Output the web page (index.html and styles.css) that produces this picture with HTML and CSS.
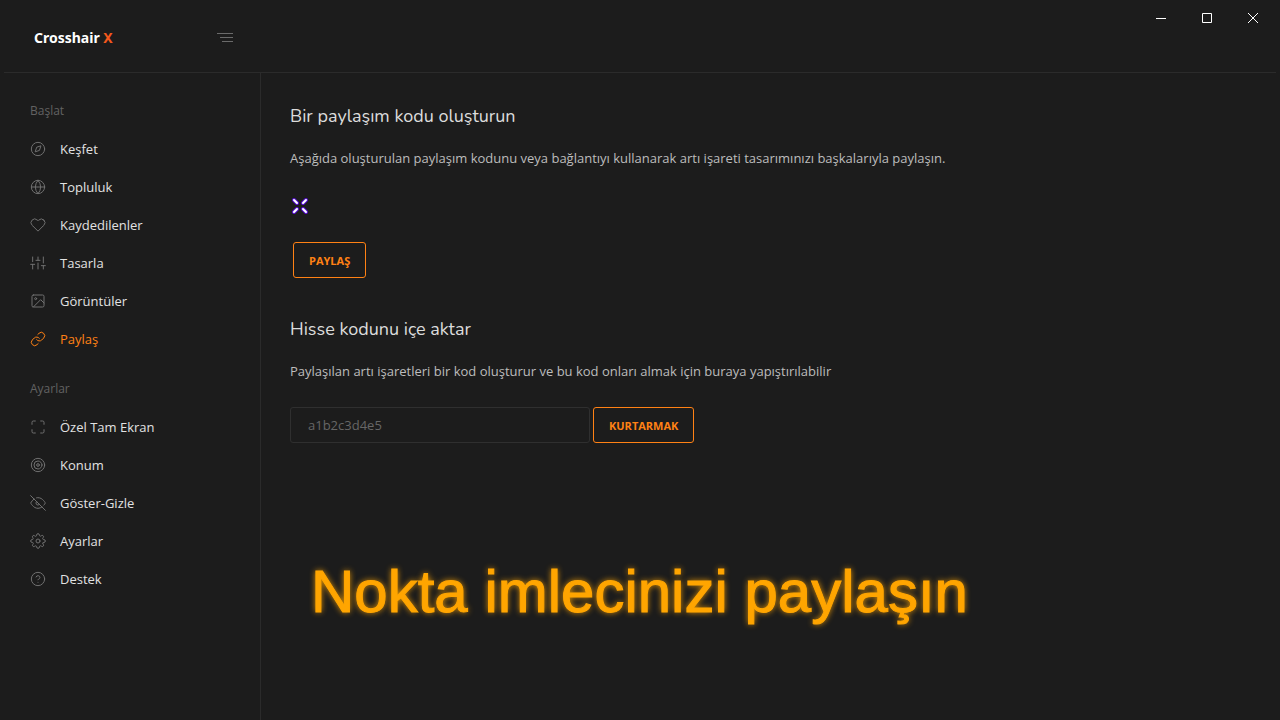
FILE: index.html
```html
<!DOCTYPE html>
<html lang="tr">
<head>
  <meta charset="UTF-8" />
  <meta name="viewport" content="width=device-width, initial-scale=1.0" />
  <title>Crosshair X</title>
  <link rel="stylesheet" href="styles.css">
</head>
<body>
  <header class="topbar">
    <div class="brand">
      <a href="#" class="logo">Crosshair <span>X</span></a>
      <button type="button" class="menu-toggle" aria-label="Menü">
        <svg width="16" height="10" viewBox="0 0 16 10"><path d="M0 .5h16M3 4.5h13M5 8.5h11"/></svg>
      </button>
    </div>
    <div class="window-controls">
      <button type="button" aria-label="Simge durumuna küçült"><svg viewBox="0 0 10 10"><path d="M0 5.5h10"/></svg></button>
      <button type="button" aria-label="Ekranı kapla"><svg viewBox="0 0 10 10"><path d="M.5.5h9v9h-9z"/></svg></button>
      <button type="button" aria-label="Kapat"><svg viewBox="0 0 10 10"><path d="M0 0l10 10M10 0L0 10"/></svg></button>
    </div>
  </header>

  <div class="layout">
    <nav class="sidebar">
      <h3>Başlat</h3>
      <ul>
        <li><a href="#"><svg viewBox="0 0 24 24"><circle cx="12" cy="12" r="10"/><path d="M16.24 7.76l-2.12 6.36-6.36 2.12 2.12-6.36z"/></svg>Keşfet</a></li>
        <li><a href="#"><svg viewBox="0 0 24 24"><circle cx="12" cy="12" r="10"/><path d="M2 12h20M12 2a15.3 15.3 0 0 1 4 10 15.3 15.3 0 0 1-4 10 15.3 15.3 0 0 1-4-10 15.3 15.3 0 0 1 4-10z"/></svg>Topluluk</a></li>
        <li><a href="#"><svg viewBox="0 0 24 24"><path d="M20.84 4.61a5.5 5.5 0 0 0-7.78 0L12 5.67l-1.06-1.06a5.5 5.5 0 0 0-7.78 7.78l1.06 1.06L12 21.23l7.78-7.78 1.06-1.06a5.5 5.5 0 0 0 0-7.78z"/></svg>Kaydedilenler</a></li>
        <li><a href="#"><svg viewBox="0 0 24 24"><path d="M4 21v-7M4 10V3M12 21v-9M12 8V3M20 21v-5M20 12V3M1 14h6M9 8h6M17 16h6"/></svg>Tasarla</a></li>
        <li><a href="#"><svg viewBox="0 0 24 24"><rect x="3" y="3" width="18" height="18" rx="2"/><circle cx="8.5" cy="8.5" r="1.5"/><path d="M21 15l-5-5L5 21"/></svg>Görüntüler</a></li>
        <li><a href="#" class="active"><svg viewBox="0 0 24 24"><path d="M10 13a5 5 0 0 0 7.54.54l3-3a5 5 0 0 0-7.07-7.07l-1.72 1.71"/><path d="M14 11a5 5 0 0 0-7.54-.54l-3 3a5 5 0 0 0 7.07 7.07l1.71-1.71"/></svg>Paylaş</a></li>
      </ul>
      <h3>Ayarlar</h3>
      <ul>
        <li><a href="#"><svg viewBox="0 0 24 24"><path d="M8 3H5a2 2 0 0 0-2 2v3m18 0V5a2 2 0 0 0-2-2h-3m0 18h3a2 2 0 0 0 2-2v-3M3 16v3a2 2 0 0 0 2 2h3"/></svg>Özel Tam Ekran</a></li>
        <li><a href="#"><svg viewBox="0 0 24 24"><circle cx="12" cy="12" r="10"/><circle cx="12" cy="12" r="6"/><circle cx="12" cy="12" r="2"/></svg>Konum</a></li>
        <li><a href="#"><svg viewBox="0 0 24 24"><path d="M17.94 17.94A10.07 10.07 0 0 1 12 20c-7 0-11-8-11-8a18.45 18.45 0 0 1 5.06-5.94M9.9 4.24A9.12 9.12 0 0 1 12 4c7 0 11 8 11 8a18.5 18.5 0 0 1-2.16 3.19m-6.72-1.07a3 3 0 1 1-4.24-4.24M1 1l22 22"/></svg>Göster-Gizle</a></li>
        <li><a href="#"><svg viewBox="0 0 24 24"><circle cx="12" cy="12" r="3"/><path d="M19.4 15a1.65 1.65 0 0 0 .33 1.82l.06.06a2 2 0 1 1-2.83 2.83l-.06-.06a1.65 1.65 0 0 0-2.8 1.17V21a2 2 0 0 1-4 0v-.09A1.65 1.65 0 0 0 9 19.4a1.65 1.65 0 0 0-1.82.33l-.06.06a2 2 0 1 1-2.83-2.83l.06-.06A1.65 1.65 0 0 0 3.09 14H3a2 2 0 0 1 0-4h.09A1.65 1.65 0 0 0 4.6 9a1.65 1.65 0 0 0-.33-1.82l-.06-.06a2 2 0 1 1 2.83-2.83l.06.06A1.65 1.65 0 0 0 10 3.09V3a2 2 0 0 1 4 0v.09a1.65 1.65 0 0 0 2.82 1.17l.06-.06a2 2 0 1 1 2.83 2.83l-.06.06A1.65 1.65 0 0 0 20.91 10H21a2 2 0 0 1 0 4h-.09a1.65 1.65 0 0 0-1.51 1z"/></svg>Ayarlar</a></li>
        <li><a href="#"><svg viewBox="0 0 24 24"><circle cx="12" cy="12" r="10"/><path d="M9.09 9a3 3 0 0 1 5.83 1c0 2-3 3-3 3M12 17h.01"/></svg>Destek</a></li>
      </ul>
    </nav>

    <main class="content">
      <section class="share">
        <h2>Bir paylaşım kodu oluşturun</h2>
        <p>Aşağıda oluşturulan paylaşım kodunu veya bağlantıyı kullanarak artı işareti tasarımınızı başkalarıyla paylaşın.</p>
        <svg class="crosshair" width="20" height="24" viewBox="0 0 20 24">
          <path class="outline" d="M4 6l3 3M16 6l-3 3M4 18l3-3M16 18l-3-3"/>
          <path class="fill" d="M4 6l3 3M16 6l-3 3M4 18l3-3M16 18l-3-3"/>
        </svg>
        <button type="button" class="btn">PAYLAŞ</button>
      </section>

      <section class="import">
        <h2>Hisse kodunu içe aktar</h2>
        <p><label for="code">Paylaşılan artı işaretleri bir kod oluşturur ve bu kod onları almak için buraya yapıştırılabilir</label></p>
        <form class="code-form">
          <input type="text" id="code" name="code" placeholder="a1b2c3d4e5">
          <button type="button" class="btn">KURTARMAK</button>
        </form>
      </section>

      <p class="caption">Nokta imlecinizi paylaşın</p>
    </main>
  </div>
</body>
</html>
```

FILE: styles.css
```css
* { box-sizing: border-box; }
body {
  margin: 0; min-height: 100vh;
  display: flex; flex-direction: column;
  background: #1c1c1c; color: #bdbdbd;
  font-family: 'Open Sans', 'Noto Sans', sans-serif; font-size: 13px; line-height: 20px;
}
h2, h3, p, ul { margin: 0; padding: 0; font-weight: 400; }
ul { list-style: none; }
a { color: inherit; text-decoration: none; }
button, input { font-family: inherit; }
svg { display: block; fill: none; stroke: currentColor; }

/* top bar */
.topbar {
  display: flex; justify-content: space-between; align-items: flex-start;
  height: 73px; margin: 0 4px;
  border-bottom: 1px solid #2b2b2b;
}
.brand {
  display: flex; justify-content: space-between; align-items: center;
  width: 229px; height: 76px; padding-left: 30px;
}
.logo { color: #fff; font-family: 'Noto Sans', sans-serif; font-size: 14px; font-weight: 700; }
.logo span { color: #f4581c; }
.menu-toggle { padding: 0; border: none; background: none; color: #6a6a6a; cursor: pointer; }
.window-controls { display: flex; }
.window-controls button {
  display: flex; justify-content: center; align-items: center;
  width: 46px; height: 37px; padding: 0;
  border: none; background: none; color: #fff;
}
.window-controls button:hover { background: #333; }
.window-controls svg { width: 10px; height: 10px; margin-bottom: 1px; }

.layout { display: flex; flex: 1; }

/* sidebar */
.sidebar {
  width: 261px; padding: 19px 0;
  border-right: 1px solid #2b2b2b;
}
.sidebar h3 {
  padding: 0 30px;
  color: #626262; font-size: 12px; line-height: 38px;
}
.sidebar ul { margin-bottom: 12px; }
.sidebar a {
  display: flex; align-items: center; gap: 14px;
  height: 38px; padding: 0 30px; color: #e2e2e2;
}
.sidebar svg {
  width: 16px; height: 16px; color: #707070;
  stroke-width: 1.5; stroke-linecap: round; stroke-linejoin: round;
}
.sidebar .active, .sidebar .active svg { color: #ff8114; }

/* content */
.content { flex: 1; padding: 31px 29px; }
.content h2 {
  margin-bottom: 20px;
  color: #dcdcdc; font-family: Nunito, 'Open Sans', sans-serif; font-size: 18px; line-height: 24px;
}
.crosshair { margin: 26px 0 24px; stroke-linecap: round; }
.crosshair .outline { stroke: #5a10d8; stroke-width: 4; }
.crosshair .fill { stroke: #fff; stroke-width: 2; }
.btn {
  height: 36px; padding: 0 15px;
  border: 1px solid #ff8114; border-radius: 3px;
  background: none; color: #ff8114;
  font-size: 11px; font-weight: 700; cursor: pointer;
}
.btn:hover { background: #2a211a; }
.share { margin-bottom: 39px; }
.share .btn { margin-left: 3px; }
.code-form { display: flex; gap: 3px; margin-top: 26px; }
.code-form input {
  width: 300px; height: 36px; padding: 0 17px;
  border: 1px solid #2f2f2f; border-radius: 3px;
  background: none; color: #e2e2e2; font-size: 13px;
}
.code-form input::placeholder { color: #666; }
.caption {
  margin: 114px 0 0 21px;
  color: #ffa500; font-family: 'Liberation Sans', Arial, sans-serif; font-size: 60px; line-height: 70px;
  -webkit-text-stroke: 1px #ffa500;
  text-shadow: 0 0 6px #ffa500;
}
```
